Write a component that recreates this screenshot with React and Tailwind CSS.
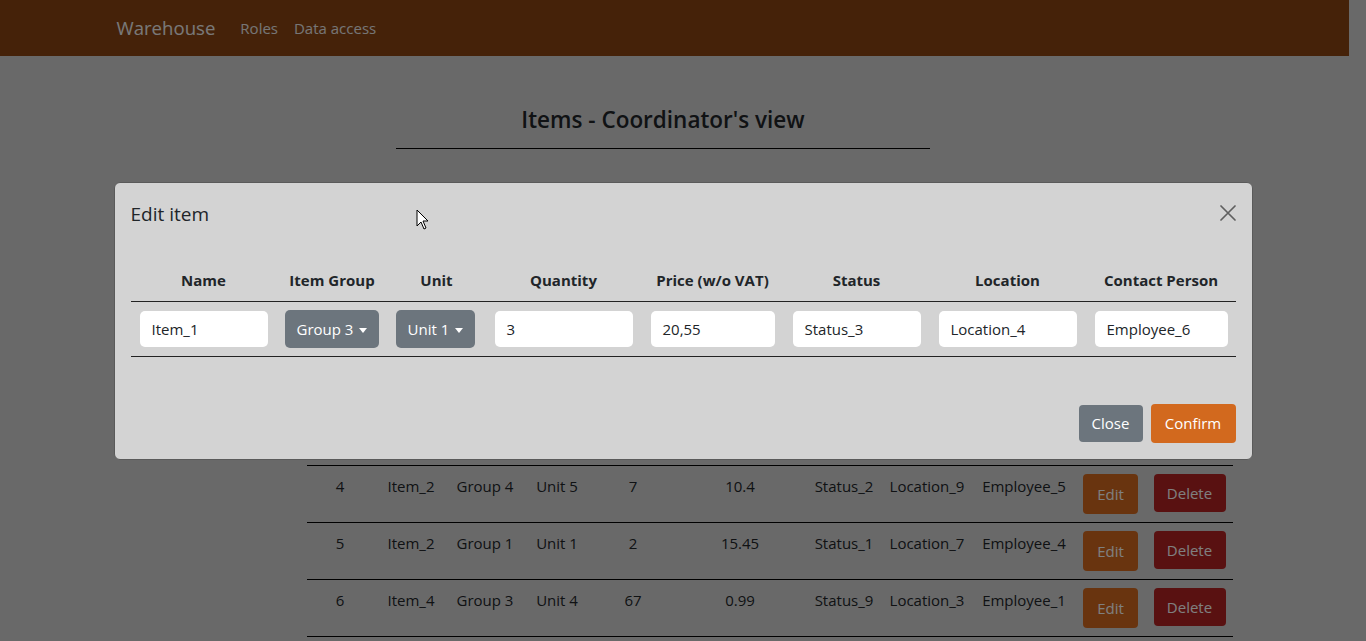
import React from "react";

const rows = [
  ["1", "Item_1", "Group 3", "Unit 1", "3", "20.55", "Status_3", "Location_4", "Employee_6"],
  ["2", "Item_3", "Group 2", "Unit 2", "12", "5.5", "Status_1", "Location_2", "Employee_3"],
  ["3", "Item_5", "Group 1", "Unit 3", "8", "1.25", "Status_4", "Location_1", "Employee_2"],
  ["4", "Item_2", "Group 4", "Unit 5", "7", "10.4", "Status_2", "Location_9", "Employee_5"],
  ["5", "Item_2", "Group 1", "Unit 1", "2", "15.45", "Status_1", "Location_7", "Employee_4"],
  ["6", "Item_4", "Group 3", "Unit 4", "67", "0.99", "Status_9", "Location_3", "Employee_1"],
];

const bgCols = "grid grid-cols-[66px_76px_72px_72px_80px_134px_74px_92px_102px_71px_87px]";
const mCols = "grid grid-cols-[146px_111px_98px_156px_142px_146px_156px_151px]";

function Caret() {
  return (
    <span className="inline-block ml-[6px] w-0 h-0 border-x-[4.5px] border-x-transparent border-t-[5px] border-t-white align-middle" />
  );
}

export default function App() {
  const font = "font-['Open_Sans',sans-serif]";
  return (
    <div className={`relative min-h-screen bg-[#d3d3d3] pr-[17px] text-[#212529] ${font}`}>
      {/* navbar */}
      <nav className="h-14 bg-[#8B4513] flex items-center">
        <div className="w-[1140px] mx-auto px-3 flex items-center">
          <span className="text-[18.6px] text-[#f2f2f2] mr-[17px] leading-[30px]">Warehouse</span>
          <span className="text-[15px] text-[#ececec] px-2 leading-6">Roles</span>
          <span className="text-[15px] text-[#ececec] px-2 leading-6">Data access</span>
        </div>
      </nav>

      {/* page */}
      <main>
        <div className="ml-[396px] w-[534px] mt-[49px]">
          <h1 className="text-center text-[22.5px] font-semibold leading-[29px] text-[#212529]">
            Items - Coordinator's view
          </h1>
          <div className="mt-[14px] h-px bg-black" />
        </div>
        <div className="ml-[307px] w-[926px] mt-[105px] text-[15px]">
          <div className={`${bgCols} h-[41px] border-b border-black font-bold items-center text-center`}>
            <div>#</div><div>Name</div><div>Group</div><div>Unit</div><div>Qty</div><div>Price</div>
            <div>Status</div><div>Location</div><div>Contact</div><div></div><div></div>
          </div>
          {rows.map((r) => (
            <div key={r[0]} className={`${bgCols} h-[57px] border-b border-black text-center`}>
              {r.map((c, i) => (
                <div key={i} className="pt-2 leading-6 whitespace-nowrap">{c}</div>
              ))}
              <div className="pt-2 flex justify-center">
                <button className="h-10 w-[55px] rounded bg-[#d2691e] text-white">Edit</button>
              </div>
              <div className="pt-2 flex justify-center">
                <button className="h-[38px] w-[72px] rounded bg-[#b22222] text-white">Delete</button>
              </div>
            </div>
          ))}
        </div>
      </main>

      {/* backdrop */}
      <div className="fixed inset-0 bg-black/50" />

      {/* modal */}
      <div className="fixed inset-0 flex items-center justify-center">
        <div className="w-[1139px] bg-[#d3d3d3] border border-[#5a5a5a] rounded-md">
          <div className="h-[62px] px-4 flex items-center justify-between">
            <h5 className="text-[19px] font-medium leading-[30px]">Edit item</h5>
            <svg width="16" height="16" viewBox="0 0 16 16" className="mt-[-2px]">
              <path d="M1 1 L15 15 M15 1 L1 15" stroke="#5f5f5f" strokeWidth="1.7" strokeLinecap="round" />
            </svg>
          </div>
          <div className="p-4">
            <div className="mb-4 text-[15px]">
              <div className={`${mCols} h-[41px] border-b border-[#222] items-center text-center font-bold`}>
                <div>Name</div>
                <div>Item Group</div>
                <div>Unit</div>
                <div>Quantity</div>
                <div>Price (w/o VAT)</div>
                <div>Status</div>
                <div>Location</div>
                <div>Contact Person</div>
              </div>
              <div className={`${mCols} h-[55px] border-b border-[#222] items-center`}>
                {[
                  ["Item_1", "input"],
                  ["Group 3", "btn"],
                  ["Unit 1", "btn"],
                  ["3", "input"],
                  ["20,55", "input"],
                  ["Status_3", "input"],
                  ["Location_4", "input"],
                  ["Employee_6", "input"],
                ].map(([v, t], i) =>
                  t === "input" ? (
                    <div key={i} className="px-[9px]">
                      <div className="h-9 bg-white rounded-[5px] px-3 flex items-center leading-6">{v}</div>
                    </div>
                  ) : (
                    <div key={i} className="px-2">
                      <button className="h-[38px] px-3 rounded-[5px] bg-[#6c757d] text-white leading-6 whitespace-nowrap">
                        {v}
                        <Caret />
                      </button>
                    </div>
                  )
                )}
              </div>
            </div>
          </div>
          <div className="pt-[15px] pb-4 px-4 flex justify-end items-center gap-2">
            <button className="h-[37px] w-16 rounded bg-[#6c757d] text-white text-[15px]">Close</button>
            <button className="h-[39px] w-[85px] rounded bg-[#d2691e] text-white text-[15px]">Confirm</button>
          </div>
        </div>
      </div>

      {/* mouse cursor */}
      <svg className="fixed left-[416px] top-[209px]" width="14" height="22" viewBox="0 0 14 22">
        <path d="M1 1 L1 17 L5 13 L8 20 L10 19 L7 12 L12 12 Z" fill="white" stroke="black" strokeWidth="1" strokeLinejoin="round" />
      </svg>
    </div>
  );
}
